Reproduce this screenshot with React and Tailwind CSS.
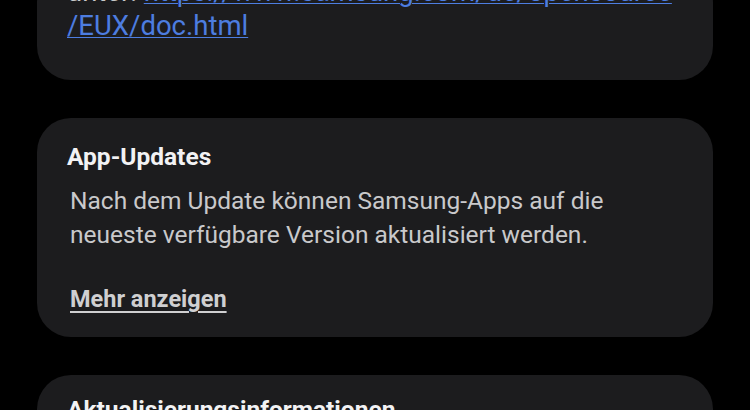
const font = { fontFamily: 'Roboto, "Noto Sans", sans-serif' };

// Single rounded panel used for every settings section
const Card = ({ children, className = '' }) => (
  <section className={`bg-[#1c1c1e] rounded-[34px] px-[30px] ${className}`}>
    {children}
  </section>
);

const App = () => {
  return (
    <div className="w-[750px] h-[410px] overflow-hidden bg-black px-[37px]" style={font}>
      <div className="-mt-[31px] flex flex-col gap-[38px]">

        {/* Licence link, scrolled partly out of view */}
        <Card className="pt-[6px] pb-[37px]">
          <p className="whitespace-nowrap text-[27.5px] leading-[34px] text-[#c9c9cb]">
            unter:{' '}
            <a className="text-[#4d7de0] underline underline-offset-2 decoration-1">
              https://www.samsung.com/de/opensource<br />/EUX/doc.html
            </a>
          </p>
        </Card>

        {/* App updates */}
        <Card className="pt-[24px] pb-[23px]">
          <h2 className="text-[24.5px] leading-[30px] font-bold text-[#f2f2f4]">App-Updates</h2>
          <p className="mt-[12px] pl-[3px] text-[24.5px] leading-[34px] text-[#c9c9cb]">
            Nach dem Update können Samsung-Apps auf die<br />
            neueste verfügbare Version aktualisiert werden.
          </p>
          <button className="mt-[32px] pl-[3px] text-[23.5px] leading-[30px] font-bold text-[#cfcfd1] underline underline-offset-4">
            Mehr anzeigen
          </button>
        </Card>

        {/* Update information */}
        <Card className="pt-[20px] pb-[30px]">
          <h2 className="text-[24.5px] leading-[30px] font-bold text-[#f2f2f4]">Aktualisierungsinformationen</h2>
        </Card>
      </div>
    </div>
  );
};

export default App;
